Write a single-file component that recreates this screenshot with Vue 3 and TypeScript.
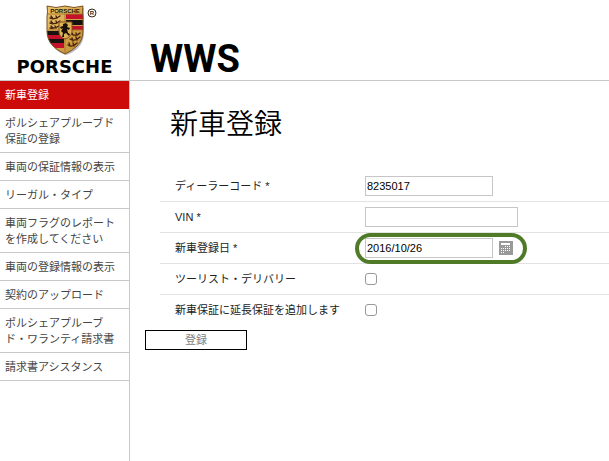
<script setup lang="ts">
import { ref } from 'vue'

interface MenuItem {
  id: string
  lines: string[]
}

const menu: MenuItem[] = [
  { id: 'register', lines: ['新車登録'] },
  { id: 'approved', lines: ['ポルシェアプルーブド', '保証の登録'] },
  { id: 'warranty', lines: ['車両の保証情報の表示'] },
  { id: 'legal', lines: ['リーガル・タイプ'] },
  { id: 'flags', lines: ['車両フラグのレポート', 'を作成してください'] },
  { id: 'registration', lines: ['車両の登録情報の表示'] },
  { id: 'upload', lines: ['契約のアップロード'] },
  { id: 'claims', lines: ['ポルシェアプルーブ', 'ド・ワランティ請求書'] },
  { id: 'assistance', lines: ['請求書アシスタンス'] },
]

const active = ref('register')
const dealer = ref('8235017')
const vin = ref('')
const date = ref('2016/10/26')
const tourist = ref(false)
const extended = ref(false)

const dots: [number, number][] = [
  [6, 5], [8, 5], [10, 5],
  [2, 7], [4, 7], [6, 7], [8, 7], [10, 7],
  [2, 9], [4, 9], [6, 9], [8, 9], [10, 9],
  [2, 11], [4, 11],
]
</script>

<template>
  <div class="page">
    <aside class="sidebar">
      <div class="brand">
        <svg class="crest" viewBox="0 0 60 56" aria-hidden="true">
          <defs>
            <linearGradient id="gold" x1="0" y1="0" x2="1" y2="1">
              <stop offset="0" stop-color="#f0cf7c" />
              <stop offset="0.5" stop-color="#d8a84c" />
              <stop offset="1" stop-color="#b98530" />
            </linearGradient>
            <clipPath id="shield">
              <path d="M2 6Q11 9 20 6Q29 9 38 6Q37 11 38 17V31Q38 40 32 46Q27 51 20 54Q13 51 8 46Q2 40 2 31V17Q3 11 2 6Z" />
            </clipPath>
          </defs>
          <path d="M4 8Q12 11 21 8Q31 11 39 8V33Q39 42 33 48Q28 53 21 55Q14 53 9 48Z" fill="#b8bcc5" />
          <g clip-path="url(#shield)">
            <rect width="40" height="56" fill="url(#gold)" />
            <path d="M21 14H38V19H21ZM21 26H38V30H21ZM2 35H19V39H2ZM4 43H19V48H4Z" fill="#c5102b" />
            <path d="M21 20H38V25H21ZM2 31H19V35H2ZM2 39H19V43H2Z" fill="#15120f" />
            <path d="M20 14V53M3 14H37M3 30H37" stroke="#a9772d" fill="none" />
            <g fill="none" stroke="#49250f" stroke-width="1.4" stroke-linecap="round">
              <path d="M5 18Q10 20 15 16M8 19L6 16M12 18L11 16" />
              <path d="M5 23Q10 25 15 21M8 24L6 21M12 23L11 21" />
              <path d="M5 28Q10 29 14 26M8 28L6 26M11 28L10 26" />
              <path d="M26 34Q31 37 35 33M28 35L27 33M32 35L31 33" />
              <path d="M25 39Q30 42 35 37M28 41L27 38M32 40L31 37" />
              <path d="M23 45Q27 48 32 43M25 46L24 43M29 46L28 43" />
            </g>
          </g>
          <path d="M14 22H27V32Q26 37 20 39Q14 37 14 32Z" fill="#dfb457" stroke="#7d5119" />
          <path d="M18 24L21 23L23 25L22 27L25 28L24 30L22 29L23 33L25 34L24 36L21 33L19 34V37H17L18 33L16 31L18 28L16 29L15 27L18 26Z" fill="#17110a" />
          <path d="M2 6Q11 9 20 6Q29 9 38 6Q37 11 38 17V31Q38 40 32 46Q27 51 20 54Q13 51 8 46Q2 40 2 31V17Q3 11 2 6Z" fill="none" stroke="#7a4e1c" />
          <text x="20" y="13" text-anchor="middle" class="crest-name">PORSCHE</text>
          <circle cx="47" cy="13" r="4" fill="none" stroke="#33281c" />
          <text x="47" y="15" text-anchor="middle" class="reg-mark">R</text>
        </svg>
        <span class="wordmark">PORSCHE</span>
      </div>
      <nav>
        <a
          v-for="item in menu"
          :key="item.id"
          :href="'#' + item.id"
          class="menu-item"
          :class="{ active: item.id === active }"
          @click.prevent="active = item.id"
        >
          <span v-for="line in item.lines" :key="line" class="line">{{ line }}</span>
        </a>
      </nav>
    </aside>

    <main class="main">
      <header class="app-header"><span class="app-name">WWS</span></header>
      <h1>新車登録</h1>
      <form @submit.prevent>
        <div class="rows">
          <div class="row">
            <label for="dealer">ディーラーコード *</label>
            <input id="dealer" v-model="dealer" type="text" class="box" />
          </div>
          <div class="row">
            <label for="vin">VIN *</label>
            <input id="vin" v-model="vin" type="text" class="box wide" />
          </div>
          <div class="row">
            <label for="date">新車登録日 *</label>
            <div class="date-field">
              <input id="date" v-model="date" type="text" class="box" />
              <button type="button" class="calendar" aria-label="カレンダー">
                <svg viewBox="0 0 14 14">
                  <rect width="14" height="14" fill="#999" />
                  <rect x="2" y="2" width="9" height="2" fill="#fff" />
                  <rect
                    v-for="[x, y] in dots"
                    :key="`${x}-${y}`"
                    :x="x"
                    :y="y"
                    width="1"
                    height="1"
                    fill="#fff"
                  />
                </svg>
              </button>
              <span class="highlight"></span>
            </div>
          </div>
          <div class="row">
            <label for="tourist">ツーリスト・デリバリー</label>
            <input id="tourist" v-model="tourist" type="checkbox" />
          </div>
          <div class="row">
            <label for="extended">新車保証に延長保証を追加します</label>
            <input id="extended" v-model="extended" type="checkbox" />
          </div>
        </div>
        <button type="submit" class="submit">登録</button>
      </form>
    </main>
  </div>
</template>

<style>
body {
  background: #fff;
}
</style>

<style scoped>
.page {
  display: flex;
  min-height: 100vh;
  font-family: "Liberation Sans", "Noto Sans CJK JP", sans-serif;
  font-size: 11px;
  line-height: 16px;
  color: #222;
}
.sidebar {
  box-sizing: border-box;
  flex: 0 0 130px;
  border-right: 1px solid #c9c9c9;
}
.brand {
  box-sizing: border-box;
  height: 81px;
  border-bottom: 1px solid #c9c9c9;
  display: flex;
  flex-direction: column;
  align-items: center;
}
.crest {
  width: 60px;
  height: 56px;
  margin-left: 20px;
}
.crest-name {
  font: bold 6px "Liberation Sans", sans-serif;
  fill: #241507;
}
.reg-mark {
  font: bold 6px "Liberation Sans", sans-serif;
  fill: #33281c;
}
.wordmark {
  font-family: "DejaVu Sans", sans-serif;
  font-weight: bold;
  font-size: 18px;
  line-height: 22px;
  color: #000;
}
.menu-item {
  display: block;
  padding: 6px 5px 5px;
  border-bottom: 1px solid #c9c9c9;
  color: #444;
  text-decoration: none;
}
.menu-item.active {
  background: #cc0a0a;
  border-color: #cc0a0a;
  color: #fff;
}
.line {
  display: block;
  white-space: nowrap;
}
.main {
  flex: 1;
  min-width: 0;
}
.app-header {
  box-sizing: border-box;
  height: 81px;
  padding: 39px 20px 0;
  border-bottom: 1px solid #c9c9c9;
}
.app-name {
  display: block;
  font-family: Roboto, sans-serif;
  font-weight: 700;
  font-size: 38px;
  line-height: 40px;
  color: #000;
}
h1 {
  margin: 21px 0 29px 40px;
  font-family: "Noto Sans CJK JP", sans-serif;
  font-weight: 350;
  font-size: 28px;
  line-height: 40px;
  color: #000;
}
.rows {
  margin-left: 30px;
}
.row {
  box-sizing: border-box;
  height: 31px;
  padding-left: 15px;
  display: flex;
  align-items: center;
  border-bottom: 1px solid #e2e2e2;
}
.row:last-child {
  border-bottom-color: transparent;
}
.row label {
  flex: 0 0 190px;
  white-space: nowrap;
}
.box {
  box-sizing: border-box;
  width: 128px;
  height: 20px;
  margin: 0;
  padding: 0 1px;
  border: 1px solid #c6c6c6;
  border-radius: 0;
  background: #fff;
  font-family: "Liberation Sans", sans-serif;
  font-size: 11px;
  color: #000;
  outline: none;
}
.box.wide {
  width: 153px;
}
.date-field {
  position: relative;
  display: flex;
  align-items: center;
  gap: 6px;
}
.calendar {
  width: 14px;
  height: 14px;
  padding: 0;
  border: 0;
  background: none;
}
.calendar svg {
  display: block;
}
.highlight {
  position: absolute;
  inset: -5px -14px -6px -10px;
  border: 4px solid #4f7a28;
  border-radius: 16px;
  pointer-events: none;
}
input[type="checkbox"] {
  appearance: none;
  box-sizing: border-box;
  width: 12px;
  height: 12px;
  margin: 0;
  border: 1px solid #999;
  border-radius: 3px;
  background: #fff;
}
input[type="checkbox"]:checked {
  background: #4f7a28;
}
.submit {
  display: block;
  box-sizing: border-box;
  width: 102px;
  height: 20px;
  margin: 4px 0 0 15px;
  padding: 0;
  border: 1px solid #000;
  background: #fff;
  font: inherit;
  color: #808080;
}
</style>
